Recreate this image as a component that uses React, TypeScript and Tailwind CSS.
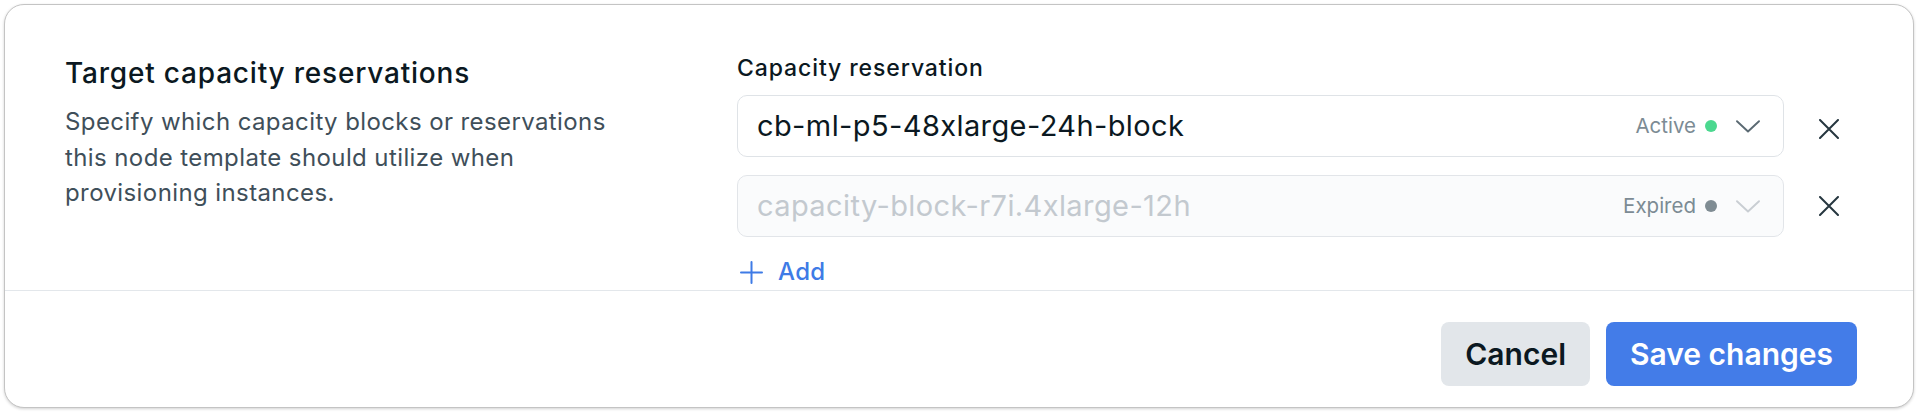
import { useState } from "react";

type Reservation = {
  name: string;
  status: "Active" | "Expired";
};

const font = { fontFamily: "Inter, 'Noto Sans', sans-serif" };

function Chevron({ muted }: { muted?: boolean }) {
  return (
    <svg width="24" height="13" viewBox="0 0 24 13" fill="none" className={muted ? "text-[#c9ced3]" : "text-[#5b6a73]"}>
      <path d="M1 1.2L12 11.5L23 1.2" stroke="currentColor" strokeWidth="1.9" strokeLinecap="round" strokeLinejoin="round" />
    </svg>
  );
}

function CloseIcon() {
  return (
    <svg width="20" height="20" viewBox="0 0 20 20" fill="none">
      <path d="M1 1L19 19M19 1L1 19" stroke="#26363f" strokeWidth="2" strokeLinecap="round" />
    </svg>
  );
}

function PlusIcon() {
  return (
    <svg width="23" height="23" viewBox="0 0 23 23" fill="none">
      <path d="M11.5 1V22M1 11.5H22" stroke="#3e7be6" strokeWidth="2" strokeLinecap="round" />
    </svg>
  );
}

function ReservationRow({ item, first }: { item: Reservation; first?: boolean }) {
  const active = item.status === "Active";
  return (
    <div className="flex items-center">
      <div
        className={`flex-1 h-[62px] flex items-center pl-[19px] pr-[23px] rounded-[10px] border ${
          active ? "bg-white border-[#dfe3e7]" : "bg-[#fafbfc] border-[#e2e5e9]"
        }`}
      >
        <span className={`flex-1 text-[29px] tracking-[0.4px] ${active ? "text-[#0b1821]" : "text-[#c3c9cf]"}`}>
          {item.name}
        </span>
        <span className="text-[20.5px] text-[#7c8b94]">{item.status}</span>
        <span className={`ml-[9px] w-3 h-3 rounded-full ${active ? "bg-[#4bd88f]" : "bg-[#7f8c93]"}`} />
        <span className="ml-[19px] flex items-center">
          <Chevron muted={!active} />
        </span>
      </div>
      <button className={`ml-[25px] w-10 h-10 flex items-center justify-center ${first ? "mt-[6px]" : ""}`}>
        <CloseIcon />
      </button>
    </div>
  );
}

export default function App() {
  const [items] = useState<Reservation[]>([
    { name: "cb-ml-p5-48xlarge-24h-block", status: "Active" },
    { name: "capacity-block-r7i.4xlarge-12h", status: "Expired" },
  ]);

  return (
    <div className="w-[1919px] h-[413px] bg-white p-1" style={font}>
      <div className="w-[1910px] h-[404px] rounded-[20px] border border-[#c4c4c4] shadow-[0_1px_3px_rgba(0,0,0,0.18)] bg-white overflow-hidden flex flex-col">
        <div className="h-[286px] shrink-0 border-b border-[#e3e7eb] flex pl-[60px] pr-[64px] pt-[48px]">
          <div className="w-[672px] shrink-0">
            <h2 className="mt-[2px] text-[28px] leading-[36px] tracking-[0.8px] font-medium text-[#0b1821]">
              Target capacity reservations
            </h2>
            <p className="mt-[13px] max-w-[570px] text-[24px] leading-[35.5px] tracking-[0.4px] text-[#3f4f5a]">
              Specify which capacity blocks or reservations this node template should utilize when provisioning
              instances.
            </p>
          </div>
          <div className="flex-1 flex flex-col">
            <label className="text-[23px] leading-[30px] tracking-[0.9px] font-medium text-[#0b1821]">
              Capacity reservation
            </label>
            <div className="mt-[12px] flex flex-col gap-[18px]">
              {items.map((item, i) => (
                <ReservationRow key={item.name} item={item} first={i === 0} />
              ))}
            </div>
            <button className="mt-[20px] h-[30px] flex items-center gap-[15px] self-start pl-[3px]">
              <PlusIcon />
              <span className="text-[24px] font-medium tracking-[0.3px] text-[#3e7be6]">Add</span>
            </button>
          </div>
        </div>
        <div className="flex-1 flex justify-end items-start gap-4 pt-[31px] pr-[56px]">
          <button className="h-16 px-[24px] rounded-[8px] bg-[#e2e6ea] text-[30px] font-semibold text-[#0b1821]">
            Cancel
          </button>
          <button className="h-16 px-[24px] rounded-[8px] bg-[#437ce8] text-[30px] font-semibold text-white">
            Save changes
          </button>
        </div>
      </div>
    </div>
  );
}
